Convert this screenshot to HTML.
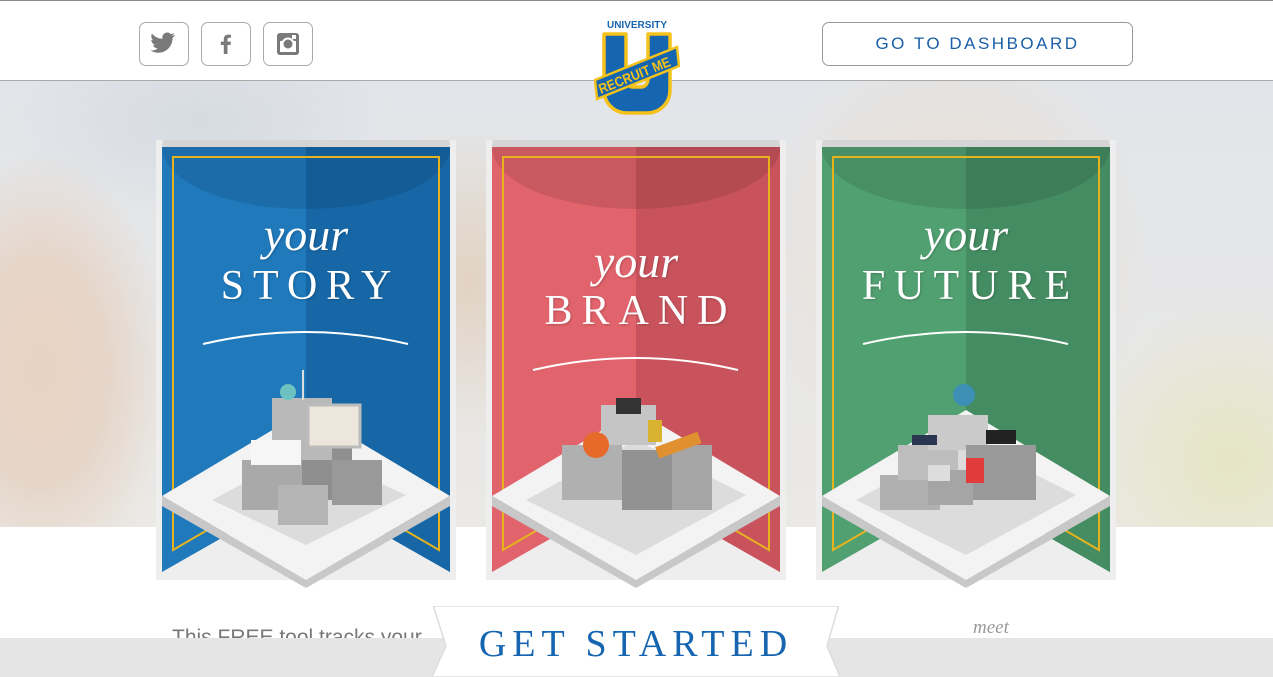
<!DOCTYPE html>
<html><head><meta charset="utf-8"><style>
*{margin:0;padding:0;box-sizing:border-box}
body{width:1273px;height:677px;overflow:hidden;position:relative;background:#fff;font-family:"Liberation Sans",sans-serif}
#hdr{position:absolute;left:0;top:0;width:1273px;height:81px;background:#fff;border-top:1px solid #8a8a8a;border-bottom:1px solid #aaa;z-index:3}
.soc{position:absolute;top:21px;width:50px;height:44px;border:1px solid #aaa;border-radius:7px}
#dash{position:absolute;left:822px;top:21px;width:311px;height:44px;border:1px solid #999;border-radius:7px;text-align:center;line-height:42px;color:#1a5fa8;font-size:17px;letter-spacing:2.5px;font-family:"Liberation Sans",sans-serif}
#bg{position:absolute;left:0;top:81px;width:1273px;height:446px;background:
radial-gradient(ellipse 130px 220px at 40px 290px,#e8d3c2 0%,#e6d5c8 50%,rgba(226,220,214,0) 100%),
radial-gradient(ellipse 120px 160px at 470px 200px,#e2d2c2 0%,rgba(220,215,210,0) 100%),
radial-gradient(ellipse 200px 220px at 950px 170px,#ecdccd 0%,rgba(230,220,210,0) 100%),
radial-gradient(ellipse 160px 160px at 1230px 380px,#e6e6c4 0%,rgba(228,228,210,0) 100%),
radial-gradient(ellipse 200px 100px at 200px 40px,#d6dbe2 0%,rgba(214,219,226,0) 100%),
linear-gradient(#e2e5e9,#e7e7e7 60%,#ebe9e5);z-index:1}
.ban{position:absolute;top:140px;width:300px;height:450px;z-index:2}
.yt{position:absolute;left:0;width:300px;text-align:center;color:#fff;font-family:"Liberation Serif",serif;font-style:italic;font-size:46px;text-shadow:1px 1px 2px rgba(0,0,0,.2)}
.bt{position:absolute;left:0;width:300px;text-align:center;color:#fff;font-family:"Liberation Serif",serif;font-size:42px;letter-spacing:9px;text-indent:9px;text-shadow:1px 1px 2px rgba(0,0,0,.2)}
#bar{position:absolute;left:0;top:638px;width:1273px;height:39px;background:#e5e5e5;z-index:4}
#gs{position:absolute;left:432px;top:606px;width:408px;height:71px;z-index:5}
</style></head><body>
<div id="hdr">
 <div class="soc" style="left:139px"><svg width="48" height="42" viewBox="0 0 48 42"><path d="M35 12c-1 .5-2 .7-3 .8 1-.6 1.8-1.6 2.2-2.8-1 .6-2 1-3.2 1.2a5 5 0 0 0-8.6 4.6c-4.2-.2-7.9-2.2-10.4-5.2-1.4 2.4-.7 5.4 1.6 6.8-.8 0-1.600-.3-2.3-.6 0 2.4 1.7 4.5 4 5-.7.2-1.5.2-2.3.1.6 2 2.5 3.5 4.7 3.5-2 1.6-4.6 2.4-7.3 2.1 2.2 1.4 4.9 2.2 7.7 2.2 9.5 0 14.7-7.900 14.5-15 1-.7 1.9-1.6 2.6-2.6z" fill="#7a7a7a"/></svg></div>
 <div class="soc" style="left:201px"><svg width="48" height="42" viewBox="0 0 48 42"><path d="M25.5 31V22h3l.5-3.4h-3.5v-2.2c0-1 .3-1.7 1.7-1.7H29v-3a25 25 0 0 0-2.7-.1c-2.7 0-4.5 1.6-4.5 4.6v2.4h-3V22h3v9z" fill="#7a7a7a"/></svg></div>
 <div class="soc" style="left:263px"><svg width="48" height="42" viewBox="0 0 48 42"><rect x="13" y="10" width="22" height="22" rx="3" fill="#7a7a7a"/><rect x="16" y="18" width="16" height="11" fill="#fff"/><circle cx="24" cy="21" r="5.5" fill="#7a7a7a" stroke="#fff" stroke-width="2"/><rect x="28" y="12" width="4" height="4" fill="#fff"/></svg></div>
 <div id="dash">GO TO DASHBOARD</div>
</div>
<svg style="position:absolute;left:594px;top:18px;z-index:6" width="86" height="102" viewBox="0 0 86 102">
 <text x="43" y="10" text-anchor="middle" font-family="Liberation Sans" font-weight="bold" font-size="10" fill="#1565b0">UNIVERSITY</text>
 <path d="M10 16h22v44c0 6 3 9 7 9h8c4 0 7-3 7-9V16h22v56c0 13-10 23-23 23H33C20 95 10 85 10 72z" fill="#1565b0" stroke="#f4c21a" stroke-width="3.5" stroke-linejoin="round"/>
 <path d="M1 62l82-33 2 19-82 33z" fill="#1565b0" stroke="#f4c21a" stroke-width="2.5"/>
 <text x="0" y="0" transform="translate(7 76) rotate(-22)" font-family="Liberation Sans" font-weight="bold" font-size="14" fill="#f4c21a" textLength="76" lengthAdjust="spacingAndGlyphs">RECRUIT ME</text>
</svg>
<div id="bg"></div>

<div class="ban" style="left:156px">
<svg width="300" height="450" viewBox="0 0 300 450">
 <polygon points="0,0 300,0 300,440 0,440" fill="#eeeeee"/>
 <polygon points="6,7 294,7 294,432 150,350 6,432" fill="#1f79bb"/>
 <polygon points="150,7 294,7 294,432 150,350" fill="#1767a6"/>
 <ellipse cx="150" cy="7" rx="144" ry="62" fill="#000" opacity=".1"/>
 <polyline points="17,395 17,17 283,17 283,395" fill="none" stroke="#e6b31e" stroke-width="2"/>
 <polyline points="17,395 17,410 60,385" fill="none" stroke="#e6b31e" stroke-width="2"/>
 <polyline points="283,395 283,410 240,385" fill="none" stroke="#e6b31e" stroke-width="2"/>
 <path d="M47 204Q150 180 252 204" stroke="#fff" stroke-width="2" fill="none"/>
 <polygon points="6,356 150,270 294,356 150,440" fill="#f3f3f3"/>
 <polygon points="6,356 150,440 294,356 294,366 150,448 6,366" fill="#c8c8c8"/>
 <polygon points="56,360 150,310 250,355 150,405" fill="#dcdcdc"/>
 <rect x="86" y="320" width="60" height="50" fill="#a9a9a9"/><rect x="146" y="300" width="50" height="60" fill="#8f8f8f"/>
 <rect x="116" y="258" width="60" height="62" fill="#b9b9b9"/><rect x="176" y="320" width="50" height="45" fill="#999"/>
 <rect x="122" y="345" width="50" height="40" fill="#b5b5b5"/>
 <rect x="152" y="265" width="52" height="42" fill="#ece6dc" stroke="#bbb" stroke-width="3"/>
 <rect x="146" y="230" width="2" height="30" fill="#ddd"/>
 <circle cx="132" cy="252" r="8" fill="#6cc2c0"/>
 <rect x="95" y="300" width="50" height="25" fill="#f6f6f6"/>
</svg>
<div class="yt" style="top:68px">your</div>
<div class="bt" style="top:122px">STORY</div>
</div>

<div class="ban" style="left:486px">
<svg width="300" height="450" viewBox="0 0 300 450">
 <polygon points="0,0 300,0 300,440 0,440" fill="#eeeeee"/>
 <polygon points="6,7 294,7 294,432 150,350 6,432" fill="#e1636b"/>
 <polygon points="150,7 294,7 294,432 150,350" fill="#c9535c"/>
 <ellipse cx="150" cy="7" rx="144" ry="62" fill="#000" opacity=".1"/>
 <polyline points="17,395 17,17 283,17 283,395" fill="none" stroke="#e6b31e" stroke-width="2"/>
 <polyline points="17,395 17,410 60,385" fill="none" stroke="#e6b31e" stroke-width="2"/>
 <polyline points="283,395 283,410 240,385" fill="none" stroke="#e6b31e" stroke-width="2"/>
 <path d="M47 230Q150 206 252 230" stroke="#fff" stroke-width="2" fill="none"/>
 <polygon points="6,356 150,270 294,356 150,440" fill="#f3f3f3"/>
 <polygon points="6,356 150,440 294,356 294,366 150,448 6,366" fill="#c8c8c8"/>
 <polygon points="40,360 150,300 260,355 150,415" fill="#dcdcdc"/>
 <rect x="76" y="305" width="60" height="55" fill="#b0b0b0"/><rect x="136" y="310" width="50" height="60" fill="#929292"/>
 <rect x="186" y="305" width="40" height="65" fill="#a5a5a5"/><rect x="115" y="265" width="55" height="40" fill="#c5c5c5"/>
 <circle cx="110" cy="305" r="13" fill="#e86a2b"/><rect x="130" y="258" width="25" height="16" fill="#333"/>
 <rect x="162" y="280" width="14" height="22" fill="#d9b230"/><rect x="170" y="300" width="45" height="12" fill="#e0902e" transform="rotate(-20 190 306)"/>
</svg>
<div class="yt" style="top:95px">your</div>
<div class="bt" style="top:147px">BRAND</div>
</div>

<div class="ban" style="left:816px">
<svg width="300" height="450" viewBox="0 0 300 450">
 <polygon points="0,0 300,0 300,440 0,440" fill="#eeeeee"/>
 <polygon points="6,7 294,7 294,432 150,350 6,432" fill="#51a072"/>
 <polygon points="150,7 294,7 294,432 150,350" fill="#448c62"/>
 <ellipse cx="150" cy="7" rx="144" ry="62" fill="#000" opacity=".1"/>
 <polyline points="17,395 17,17 283,17 283,395" fill="none" stroke="#e6b31e" stroke-width="2"/>
 <polyline points="17,395 17,410 60,385" fill="none" stroke="#e6b31e" stroke-width="2"/>
 <polyline points="283,395 283,410 240,385" fill="none" stroke="#e6b31e" stroke-width="2"/>
 <path d="M47 204Q150 180 252 204" stroke="#fff" stroke-width="2" fill="none"/>
 <polygon points="6,356 150,270 294,356 150,440" fill="#f3f3f3"/>
 <polygon points="6,356 150,440 294,356 294,366 150,448 6,366" fill="#c8c8c8"/>
 <polygon points="40,360 150,300 260,355 150,415" fill="#dcdcdc"/>
 <rect x="64" y="335" width="60" height="35" fill="#b0b0b0"/><rect x="82" y="305" width="60" height="35" fill="#bdbdbd"/>
 <rect x="112" y="275" width="60" height="35" fill="#cacaca"/><rect x="150" y="305" width="70" height="55" fill="#999"/>
 <rect x="112" y="330" width="45" height="35" fill="#a5a5a5"/><circle cx="148" cy="255" r="11" fill="#3d8fb5"/>
 <rect x="96" y="295" width="25" height="10" fill="#2a3550"/><rect x="170" y="290" width="30" height="14" fill="#222"/>
 <rect x="150" y="318" width="18" height="25" fill="#e23b3b"/><rect x="112" y="325" width="22" height="16" fill="#ddd"/>
</svg>
<div class="yt" style="top:68px">your</div>
<div class="bt" style="top:122px">FUTURE</div>
</div>

<div style="position:absolute;left:172px;top:626px;font-size:21px;color:#777;z-index:3">This FREE tool tracks your</div>
<div style="position:absolute;left:973px;top:617px;font-size:19px;color:#999;font-style:italic;font-family:'Liberation Serif',serif;z-index:3">meet</div>
<div id="bar"></div>
<svg id="gs" width="408" height="71" viewBox="0 0 408 71">
 <path d="M2 2Q1 0 4 0H404Q407 0 406 2L395 40L408 71H0L14 40z" fill="#fff" stroke="#ddd" stroke-width="1.5"/>
 <text x="204" y="50" text-anchor="middle" font-family="Liberation Serif,serif" font-size="38" fill="#1565b0" letter-spacing="6">GET STARTED</text>
</svg>
</body></html>
